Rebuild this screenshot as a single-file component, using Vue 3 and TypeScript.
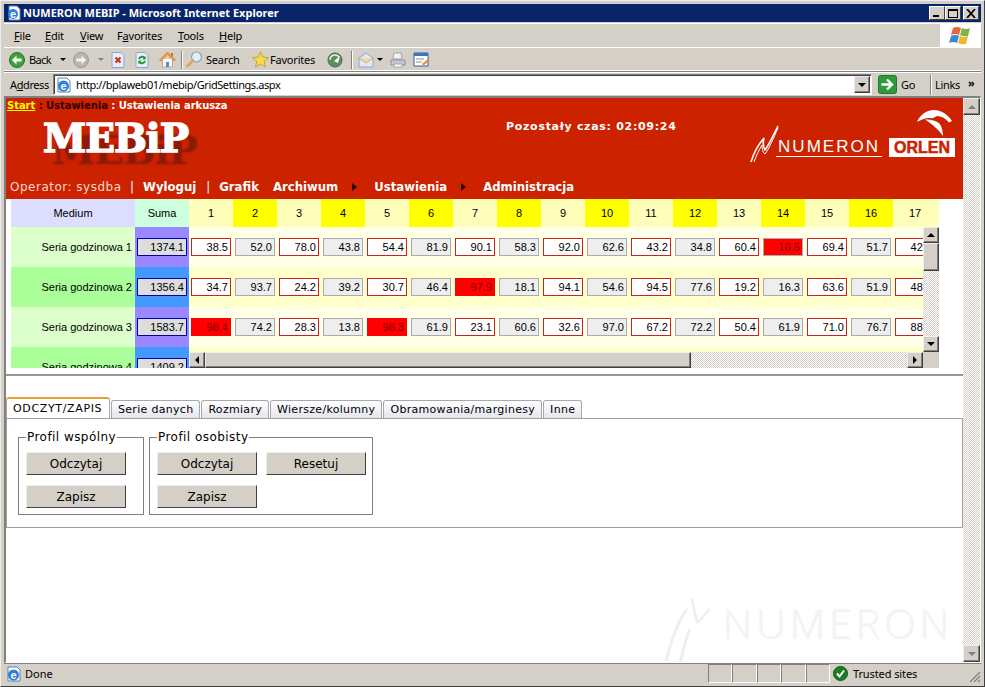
<template>
  <div class="window">
    <div class="titlebar">
      <svg class="title-ie" width="16" height="16" viewBox="0 0 16 16">
        <path d="M3 1h8l3 3v11H3z" fill="#fff" stroke="#5a7fb8" />
        <circle cx="7" cy="9" r="5" fill="#2f7fd6" />
        <text x="7" y="12.5" font-size="11" font-weight="700" text-anchor="middle" fill="#fff" font-family="Liberation Sans">e</text>
      </svg>
      <span class="title-text">NUMERON MEBIP - Microsoft Internet Explorer</span>
      <div class="title-buttons">
        <button class="win-btn"><i class="min"></i></button>
        <button class="win-btn"><i class="max"></i></button>
        <button class="win-btn close">
          <svg width="10" height="9" viewBox="0 0 10 9"><path d="M1 0l8 9M9 0l-8 9" stroke="#000" stroke-width="1.8" /></svg>
        </button>
      </div>
    </div>

    <div class="menubar">
      <div class="menu-items">
        <span v-for="m in menus" :key="m.rest" :style="{ width: m.w + 'px' }">{{ m.pre }}<u>{{ m.key }}</u>{{ m.rest }}</span>
      </div>
      <div class="flag">
        <svg width="26" height="22" viewBox="0 0 26 22">
          <path d="M5 3q4-2 8 0l-2 7q-4-2-8 0z" fill="#e8643a" />
          <path d="M14 3q4 2 8 0l-2 8q-4 1-8-1z" fill="#7ab648" />
          <path d="M3 11q4-2 8 0l-2 7q-4-2-8 0z" fill="#3c86d8" />
          <path d="M12 11q4 2 8 0l-2 8q-4 1-8-1z" fill="#f0b92c" />
        </svg>
      </div>
    </div>

    <div class="toolbar">
      <svg class="tool-back" width="16" height="16" viewBox="0 0 16 16">
        <circle cx="8" cy="8" r="7.5" fill="#3da23d" stroke="#1f7a1f" />
        <path d="M3 8l4.5-4.500V6.500H12.500v3H7.500v3z" fill="#fff" />
      </svg>
      <span class="tool-label back-label">Back</span>
      <i class="drop drop-back"></i>
      <svg class="tool-fwd" width="16" height="16" viewBox="0 0 16 16">
        <circle cx="8" cy="8" r="7.5" fill="#b9b6ae" stroke="#9a978f" />
        <path d="M13 8L8.500 3.500V6.500H3.500v3h5v3z" fill="#f4f3f0" />
      </svg>
      <i class="drop drop-fwd light"></i>
      <svg class="tool-stop" width="14" height="16" viewBox="0 0 14 16">
        <path d="M1 .5h9l3 3v12H1z" fill="#e6eefa" stroke="#8fa6cc" />
        <path d="M4.500 5.500l5 5M9.500 5.500l-5 5" stroke="#d82c20" stroke-width="2.200" />
      </svg>
      <svg class="tool-refresh" width="14" height="16" viewBox="0 0 14 16">
        <path d="M1 .5h9l3 3v12H1z" fill="#e6eefa" stroke="#8fa6cc" />
        <path d="M10 6.500A3.200 3.200 0 0 0 4 7M4 9.500A3.200 3.200 0 0 0 10 9" fill="none" stroke="#1f9a2c" stroke-width="2" />
        <path d="M10.500 4v3.500H7.500zM3.500 12V8.500h3z" fill="#1f9a2c" />
      </svg>
      <svg class="tool-home" width="17" height="17" viewBox="0 0 17 17">
        <path d="M3.500 8v8h10V8" fill="#fbf7ec" stroke="#b8aa90" />
        <path d="M.5 9L8.500 1l8 8-1.500 1L8.500 3.500 2 10z" fill="#f09a3e" stroke="#d47c28" stroke-width=".6" />
        <path d="M7 11h3v5H7z" fill="#4d8fd8" />
        <path d="M12 2h2v4l-2-2z" fill="#c86a18" />
      </svg>
      <i class="tool-sep sep-a"></i>
      <svg class="tool-search" width="17" height="17" viewBox="0 0 17 17">
        <circle cx="10.500" cy="6" r="5" fill="#e2eefa" stroke="#8da0ba" stroke-width="1.200" />
        <path d="M7 9.500L1.500 15" stroke="#d9a468" stroke-width="2.600" stroke-linecap="round" />
      </svg>
      <span class="tool-label search-label">Search</span>
      <svg class="tool-star" width="17" height="17" viewBox="0 0 17 17">
        <path d="M8.500 .8l2.300 5.300 5.700.5-4.300 3.800 1.300 5.600-5-3-5 3 1.300-5.600L.5 6.600l5.700-.5z" fill="#fbd84a" stroke="#b99a2c" stroke-width=".8" />
      </svg>
      <span class="tool-label fav-label">Favorites</span>
      <svg class="tool-media" width="16" height="16" viewBox="0 0 16 16">
        <circle cx="8" cy="8" r="7" fill="#5d8f5d" stroke="#456b45" />
        <path d="M3 8a5 5 0 0 1 9-3" fill="none" stroke="#e8f0e0" stroke-width="1.500" />
        <path d="M7 9l6-5-2 7z" fill="#fff" />
      </svg>
      <i class="tool-sep sep-b"></i>
      <svg class="tool-mail" width="16" height="16" viewBox="0 0 16 16">
        <path d="M1 6l7-5 7 5v9H1z" fill="#dfe9f6" stroke="#8fa6cc" />
        <path d="M1 6l7 5 7-5" fill="#f5d8a8" stroke="#d4aa70" />
      </svg>
      <i class="drop drop-mail"></i>
      <svg class="tool-print" width="16" height="16" viewBox="0 0 16 16">
        <path d="M4 1h7l1 6H3z" fill="#f4f4f4" stroke="#a0a0aa" />
        <path d="M1 8h14v5H1z" fill="#c6c8d0" stroke="#8f929c" />
        <path d="M4 12h8v3H4z" fill="#fff" stroke="#a0a0aa" />
      </svg>
      <svg class="tool-edit" width="17" height="16" viewBox="0 0 17 16">
        <path d="M1 1h14v13H1z" fill="#fff" stroke="#3a5f98" />
        <path d="M1 1h14v3H1z" fill="#3f74c4" />
        <path d="M3 7h8M3 10h6" stroke="#8a8a8a" />
        <path d="M9 12l6-5 1.500 1.500-6 5z" fill="#e08a3c" />
      </svg>
    </div>

    <div class="addressbar">
      <span class="addr-label">A<u>d</u>dress</span>
      <div class="addr-box">
        <svg width="16" height="16" viewBox="0 0 16 16">
          <path d="M2 1h9l3 3v11H2z" fill="#fff" stroke="#5a7fb8" />
          <circle cx="7.500" cy="9" r="5.500" fill="#2f7fd6" />
          <text x="7.500" y="12.500" font-size="11" font-weight="700" text-anchor="middle" fill="#fff" font-family="Liberation Sans">e</text>
        </svg>
        <span class="addr-url">http://bplaweb01/mebip/GridSettings.aspx</span>
        <button class="sb-btn addr-drop"><i class="arrow down"></i></button>
      </div>
      <svg class="go-icon" width="19" height="19" viewBox="0 0 19 19">
        <rect x=".5" y=".5" width="18" height="18" rx="2" fill="#2f9a3c" stroke="#1c7a2a" />
        <path d="M3.500 9.500h10M9 4.500l5 5-5 5" fill="none" stroke="#fff" stroke-width="2.400" />
      </svg>
      <span class="go-label">Go</span>
      <i class="addr-sep"></i>
      <span class="links">Links</span>
      <span class="chevrons">»</span>
    </div>

    <div class="viewport">
      <div class="page">
        <header class="site-head">
          <div class="crumbs">
            <a class="crumb-start">Start</a>
            <span class="crumb-dark"> : Ustawienia</span>
            <span> : Ustawienia arkusza</span>
          </div>
          <div class="brand-row">
            <div class="logo">MEBiP</div>
            <div class="timer">Pozostały czas: 02:09:24</div>
            <div class="partners">
              <svg class="numeron-mark" width="30" height="38" viewBox="0 0 30 38">
                <path d="M2 37C4 30 9 20 15 13c-1 4-1 9 1 12C20 20 25 9 29 1" fill="none" stroke="#fff" stroke-width="1.600" />
                <path d="M5 37C7 31 10 25 13 20c0 4 1 8 3 9C20 24 25 12 29 3" fill="none" stroke="#fff" stroke-width="1" />
              </svg>
              <div class="numeron-word">NUMERON</div>
              <div class="orlen">
                <svg width="38" height="27" viewBox="0 0 38 27">
                  <path d="M1 13C4 6 10 1 18 1c8 0 14 5 18 11l-3 1.500C29 9 25 7 21 7l-5 2.500C12 8 6 10 1 13z" fill="#fff" />
                  <path d="M9 10.500c7 0 13 1.500 15.500 5.500 1.500 3 2.500 7 2.500 11C23 21 16 15 9 10.500z" fill="#fff" />
                </svg>
                <div class="orlen-box">ORLEN</div>
              </div>
            </div>
          </div>
          <nav class="site-nav">
            <span class="operator">Operator: sysdba</span>
            <span class="pipe">|</span>
            <a class="nav-logout">Wyloguj</a>
            <span class="pipe">|</span>
            <a>Grafik</a>
            <a>Archiwum</a>
            <i class="nav-arrow"></i>
            <a>Ustawienia</a>
            <i class="nav-arrow"></i>
            <a>Administracja</a>
          </nav>
        </header>

        <div class="grid">
          <div class="grid-head">
            <div class="col-label head-medium">Medium</div>
            <div class="col-sum head-sum">Suma</div>
            <div v-for="d in 17" :key="d" class="col-day" :class="{ 'head-even': d % 2 === 0 }">{{ d }}</div>
          </div>
          <div v-for="(row, r) in rows" :key="row.label" class="grid-row" :class="{ alt: r % 2 === 1 }">
            <div class="col-label label-cell">{{ row.label }}</div>
            <div class="col-sum sum-cell"><div class="val val-sum">{{ row.sum }}</div></div>
            <div v-for="(v, i) in row.values" :key="i" class="col-day day-cell">
              <div class="val" :class="valClass(v, i)">{{ v }}</div>
            </div>
          </div>
          <div class="grid-vscroll">
            <button class="sb-btn"><i class="arrow up"></i></button>
            <button class="sb-thumb v-thumb"></button>
            <div class="sb-track"></div>
            <button class="sb-btn"><i class="arrow down"></i></button>
          </div>
          <div class="grid-hscroll">
            <button class="sb-btn"><i class="arrow left"></i></button>
            <button class="sb-thumb h-thumb"></button>
            <div class="sb-track"></div>
            <button class="sb-btn"><i class="arrow right"></i></button>
          </div>
          <div class="grid-corner"></div>
        </div>

        <div class="rule"></div>

        <div class="tabs">
          <div v-for="(t, i) in tabs" :key="t" class="tab" :class="{ active: i === 0 }">{{ t }}</div>
        </div>
        <div class="tab-panel">
          <fieldset class="profile shared">
            <legend>Profil wspólny</legend>
            <button class="act">Odczytaj</button>
            <button class="act">Zapisz</button>
          </fieldset>
          <fieldset class="profile own">
            <legend>Profil osobisty</legend>
            <button class="act">Odczytaj</button>
            <button class="act">Resetuj</button>
            <button class="act">Zapisz</button>
          </fieldset>
        </div>

        <div class="watermark">
          <svg width="60" height="66" viewBox="0 0 60 66">
            <path d="M3 64C8 44 14 26 24 12M17 66c3-12 5-22 10-34" fill="none" stroke="#efefef" stroke-width="3" />
            <path d="M29 2l5 24M34 26l13-14" fill="none" stroke="#eeeeee" stroke-width="2.500" />
          </svg>
          <span>NUMERON</span>
        </div>
      </div>

      <div class="page-scroll">
        <button class="sb-btn faint"><i class="arrow up"></i></button>
        <div class="sb-track"></div>
        <button class="sb-btn faint"><i class="arrow down"></i></button>
      </div>
    </div>

    <div class="statusbar">
      <div class="status-main">
        <svg width="16" height="16" viewBox="0 0 16 16">
          <path d="M2 1h9l3 3v11H2z" fill="#fff" stroke="#5a7fb8" />
          <circle cx="7.500" cy="9" r="5.500" fill="#2f7fd6" />
          <text x="7.500" y="12.500" font-size="11" font-weight="700" text-anchor="middle" fill="#fff" font-family="Liberation Sans">e</text>
        </svg>
        <span>Done</span>
      </div>
      <div v-for="n in 5" :key="n" class="status-pane"></div>
      <div class="status-zone">
        <svg width="15" height="15" viewBox="0 0 15 15">
          <circle cx="7.500" cy="7.500" r="7" fill="#1e7d22" stroke="#0f5a14" />
          <path d="M4 7.500l2.500 3 4.500-6" fill="none" stroke="#fff" stroke-width="2" />
        </svg>
        <span>Trusted sites</span>
        <svg class="grip" width="12" height="12" viewBox="0 0 12 12">
          <path d="M11 1L1 11M11 5l-6 6M11 9l-2 2" stroke="#808080" stroke-width="1.200" />
        </svg>
      </div>
    </div>
  </div>
</template>

<script setup lang="ts">
interface GridRow {
  label: string
  sum: string
  values: string[]
}

const menus = [
  { pre: '', key: 'F', rest: 'ile', w: 31 },
  { pre: '', key: 'E', rest: 'dit', w: 35 },
  { pre: '', key: 'V', rest: 'iew', w: 37 },
  { pre: 'F', key: 'a', rest: 'vorites', w: 61 },
  { pre: '', key: 'T', rest: 'ools', w: 41 },
  { pre: '', key: 'H', rest: 'elp', w: 30 }
]

const rows: GridRow[] = [
  {
    label: 'Seria godzinowa 1',
    sum: '1374.1',
    values: ['38.5', '52.0', '78.0', '43.8', '54.4', '81.9', '90.1', '58.3', '92.0', '62.6', '43.2', '34.8', '60.4', '10.5', '69.4', '51.7', '42.6']
  },
  {
    label: 'Seria godzinowa 2',
    sum: '1356.4',
    values: ['34.7', '93.7', '24.2', '39.2', '30.7', '46.4', '97.9', '18.1', '94.1', '54.6', '94.5', '77.6', '19.2', '16.3', '63.6', '51.9', '48.2']
  },
  {
    label: 'Seria godzinowa 3',
    sum: '1583.7',
    values: ['98.4', '74.2', '28.3', '13.8', '98.3', '61.9', '23.1', '60.6', '32.6', '97.0', '67.2', '72.2', '50.4', '61.9', '71.0', '76.7', '88.1']
  },
  { label: 'Seria godzinowa 4', sum: '1409.2', values: [] }
]

const tabs = ['ODCZYT/ZAPIS', 'Serie danych', 'Rozmiary', 'Wiersze/kolumny', 'Obramowania/marginesy', 'Inne']

// above 97 or below 11 the cell goes red, like the page does for out of range values
function valClass(v: string, i: number) {
  const n = parseFloat(v)
  return {
    'val-even': i % 2 === 1,
    'val-alarm': n > 97 || n < 11
  }
}
</script>

<style>
html,
body {
  margin: 0;
  background: #d4d0c8;
}
</style>

<style scoped>
.window {
  width: 985px;
  height: 687px;
  box-sizing: border-box;
  background: #d4d0c8;
  border-top: 1px solid #eee;
  border-left: 1px solid #eee;
  border-right: 1px solid #404040;
  border-bottom: 1px solid #404040;
  padding: 3px 3px 2px;
  display: flex;
  flex-direction: column;
  overflow: hidden;
  font-family: "Noto Sans", "Liberation Sans", sans-serif;
  font-size: 11px;
  color: #000;
}

.titlebar {
  height: 18px;
  flex: none;
  background: #0a246a;
  display: flex;
  align-items: center;
  padding-left: 2px;
  color: #fff;
  font-family: "Noto Sans", sans-serif;
  font-size: 11px;
  font-weight: 700;
}

.title-ie {
  margin-right: 1px;
}

.title-text {
  white-space: nowrap;
  margin-top: -2px;
}

.title-buttons {
  margin-left: auto;
  display: flex;
  margin-right: 2px;
}

.win-btn {
  width: 16px;
  height: 14px;
  padding: 0;
  background: #d4d0c8;
  border: 1px solid;
  border-color: #fff #404040 #404040 #fff;
  display: flex;
  align-items: center;
  justify-content: center;
  position: relative;
}

.win-btn.close {
  margin-left: 2px;
}

.min {
  position: absolute;
  left: 3px;
  bottom: 2px;
  width: 6px;
  height: 2px;
  background: #000;
}

.max {
  width: 8px;
  height: 6px;
  border: 1px solid #000;
  border-top-width: 2px;
}

.menubar {
  height: 23px;
  flex: none;
  margin-top: 2px;
  display: flex;
  border-bottom: 1px solid #fff;
  box-shadow: 0 -1px 0 #fff;
  letter-spacing: -.2px;
}

.menu-items {
  flex: 1;
  padding-left: 10px;
  display: flex;
  align-items: center;
}

.menu-items span {
  flex: none;
}

.flag {
  width: 41px;
  background: #fff;
  display: flex;
  align-items: center;
  justify-content: center;
}

.toolbar {
  height: 23px;
  flex: none;
  display: flex;
  align-items: center;
  border-bottom: 1px solid #808080;
  box-shadow: inset 0 -1px 0 #fff;
  padding-left: 5px;
  letter-spacing: -.2px;
}

.toolbar svg {
  flex: none;
}

.tool-label {
  flex: none;
}

.back-label { margin-left: 4px; width: 31px; letter-spacing: -.6px; }
.drop { flex: none; width: 0; height: 0; border: 3px solid transparent; border-top: 3px solid #000; border-bottom: 0; }
.drop.light { border-top-color: #808080; }
.drop-back { margin-right: 7px; }
.drop-fwd { margin-left: 9px; }
.tool-stop { margin-left: 7px; }
.tool-refresh { margin-left: 10px; }
.tool-home { margin-left: 10px; }
.tool-sep { flex: none; width: 1px; height: 18px; background: #808080; box-shadow: 1px 0 #fff; }
.sep-a { margin-left: 5px; }
.tool-search { margin-left: 4px; }
.search-label { margin-left: 3px; width: 34px; }
.tool-star { margin-left: 12px; }
.fav-label { margin-left: 1px; width: 47px; }
.tool-media { margin-left: 10px; }
.sep-b { margin-left: 8px; }
.tool-mail { margin-left: 6px; }
.drop-mail { margin-left: 3px; }
.tool-print { margin-left: 7px; }
.tool-edit { margin-left: 7px; }

.addressbar {
  height: 24px;
  flex: none;
  display: flex;
  align-items: center;
  box-sizing: border-box;
  border-top: 1px solid #fff;
  padding-left: 6px;
}

.addr-label {
  width: 43px;
  flex: none;
  letter-spacing: -.4px;
}

.addr-box {
  width: 819px;
  height: 21px;
  flex: none;
  box-sizing: border-box;
  background: #fff;
  border: 1px solid;
  border-color: #808080 #fff #fff #808080;
  box-shadow: inset 1px 1px #404040;
  display: flex;
  align-items: center;
  padding-left: 2px;
}

.addr-url {
  margin-left: 4px;
  flex: 1;
  letter-spacing: -.42px;
}

.addr-drop {
  width: 16px;
  height: 17px;
  margin-right: 1px;
}

.go-icon {
  margin-left: 6px;
  flex: none;
}

.go-label {
  margin-left: 4px;
  width: 29px;
  flex: none;
  letter-spacing: -.3px;
}

.addr-sep {
  width: 1px;
  height: 20px;
  background: #808080;
  box-shadow: 1px 0 #fff;
  flex: none;
}

.links {
  margin-left: 4px;
  flex: none;
  letter-spacing: -.3px;
}

.chevrons {
  margin-left: 8px;
  margin-top: -4px;
  font-weight: 700;
  flex: none;
}

.viewport {
  flex: 1;
  min-height: 0;
  display: flex;
  border-top: 2px solid #808080;
  border-left: 2px solid #808080;
  border-right: 1px solid #fff;
  border-bottom: 1px solid #fff;
}

.page {
  width: 957px;
  flex: none;
  position: relative;
  overflow: hidden;
  background: #fff;
}

.site-head {
  height: 101px;
  background: #cc2200;
  box-sizing: border-box;
  color: #fff;
  font-family: "DejaVu Sans", sans-serif;
  display: flex;
  flex-direction: column;
}

.crumbs {
  padding: 2px 0 0 1px;
  font-size: 10px;
  font-weight: 700;
  white-space: pre;
  height: 12px;
  letter-spacing: -.05px;
}

.crumb-start {
  color: #ffff00;
  text-decoration: underline;
}

.crumb-dark {
  color: #300;
}

.brand-row {
  height: 65px;
  display: flex;
  flex: none;
}

.logo {
  margin: 0 0 0 37px;
  width: 300px;
  height: 52px;
  flex: none;
  font-family: "DejaVu Serif", serif;
  font-weight: 700;
  font-size: 39px;
  line-height: 52px;
  letter-spacing: -1px;
  -webkit-text-stroke: 1.5px #fff;
  text-shadow: 9px 12px 2px #8b1a08;
}

.timer {
  margin: 8px 0 0 163px;
  width: 200px;
  flex: none;
  font-size: 11px;
  font-weight: 700;
  letter-spacing: .7px;
  white-space: nowrap;
}

.partners {
  flex: 1;
  display: flex;
  align-items: flex-end;
  padding-bottom: 20px;
  margin-left: 43px;
}

.numeron-mark {
  flex: none;
  margin-bottom: -6px;
}

.numeron-word {
  width: 106px;
  box-sizing: border-box;
  font-family: "Liberation Sans", sans-serif;
  font-size: 17px;
  line-height: 19px;
  letter-spacing: 2px;
  border-bottom: 1px solid #fff;
  text-align: center;
  margin-left: -3px;
}

.orlen {
  margin-left: 7px;
  display: flex;
  flex-direction: column;
  align-items: flex-end;
  width: 66px;
}

.orlen svg {
  margin-right: 1px;
  margin-bottom: 2px;
}

.orlen-box {
  width: 66px;
  height: 19px;
  background: #fff;
  color: #cc2200;
  font-family: "Liberation Sans", sans-serif;
  font-weight: 700;
  font-size: 16px;
  line-height: 19px;
  text-align: center;
  -webkit-text-stroke: .5px #cc2200;
}

.site-nav {
  display: flex;
  align-items: center;
  padding-left: 4px;
  font-size: 11.7px;
  font-weight: 700;
  height: 20px;
  white-space: nowrap;
}

.operator {
  font-size: 12px;
  font-weight: 400;
  letter-spacing: .5px;
  color: #f4d8cc;
  width: 120px;
}

.pipe {
  font-weight: 400;
  width: 13px;
}

.site-nav a {
  margin-right: 14px;
}

.site-nav a.nav-logout {
  margin-right: 10px;
}

.nav-arrow {
  width: 0;
  height: 0;
  border: 4px solid transparent;
  border-left: 5px solid #300;
  border-right: 0;
  margin-right: 17px;
}

.grid {
  margin-left: 5px;
  width: 928px;
  height: 169px;
  position: relative;
  overflow: hidden;
  font-family: "Liberation Sans", sans-serif;
  font-size: 11px;
}

.grid-head {
  display: flex;
  height: 28px;
  background: #ffffbb;
  align-items: stretch;
}

.grid-head > div {
  display: flex;
  align-items: center;
  justify-content: center;
}

.grid-row {
  display: flex;
  height: 40px;
  width: 926px;
  background: #ffffe8;
}

.grid-row.alt {
  background: #ffffcc;
}

.col-label {
  width: 124px;
  flex: none;
}

.col-sum {
  width: 54px;
  flex: none;
}

.col-day {
  width: 44px;
  flex: none;
}

.head-medium {
  background: #ddddff;
}

.head-sum {
  background: #ccffdd;
}

.head-even {
  background: #ffff00;
}

.label-cell {
  background: #ddffcc;
  text-align: right;
  padding-right: 3px;
  box-sizing: border-box;
  line-height: 40px;
  white-space: nowrap;
}

.alt .label-cell {
  background: #aaff99;
}

.sum-cell {
  background: #9988ff;
  display: flex;
  justify-content: center;
  align-items: center;
}

.alt .sum-cell {
  background: #4499ff;
}

.day-cell {
  display: flex;
  justify-content: center;
  align-items: center;
}

.val {
  width: 40px;
  height: 18px;
  box-sizing: border-box;
  border: 1px solid #cc2222;
  background: #fff;
  text-align: right;
  padding-right: 2px;
  line-height: 16px;
}

.val-sum {
  width: 50px;
  border-color: #0000aa;
  background: #dddddd;
}

.val-even {
  border-color: #aaaaaa;
  background: #eeeeee;
}

.val-alarm {
  background: #ff0000;
  border-color: #ff0000;
  color: #880000;
}

.val-alarm.val-even {
  border-color: #aaaaaa;
}

.grid-vscroll {
  position: absolute;
  left: 912px;
  top: 28px;
  width: 16px;
  height: 125px;
  display: flex;
  flex-direction: column;
}

.grid-hscroll {
  position: absolute;
  left: 178px;
  top: 153px;
  width: 734px;
  height: 16px;
  display: flex;
}

.grid-corner {
  position: absolute;
  left: 912px;
  top: 153px;
  width: 16px;
  height: 16px;
  background: #d4d0c8;
}

.sb-btn,
.sb-thumb {
  flex: none;
  padding: 0;
  background: #d4d0c8;
  border: 1px solid;
  border-color: #eee #404040 #404040 #eee;
  box-shadow: inset -1px -1px #808080;
  box-sizing: border-box;
  display: flex;
  align-items: center;
  justify-content: center;
}

.grid-vscroll .sb-btn,
.grid-hscroll .sb-btn {
  width: 16px;
  height: 16px;
}

.v-thumb {
  height: 28px;
}

.h-thumb {
  width: 486px;
}

.sb-track {
  flex: 1;
  background: repeating-conic-gradient(#d4d0c8 0 25%, #fff 0 50%) 0 0 / 2px 2px;
}

.arrow {
  width: 0;
  height: 0;
  border: 4px solid transparent;
}

.arrow.up {
  border-bottom-color: #000;
  border-top: 0;
}

.arrow.down {
  border-top-color: #000;
  border-bottom: 0;
}

.arrow.left {
  border-right-color: #000;
  border-left: 0;
}

.arrow.right {
  border-left-color: #000;
  border-right: 0;
}

.faint .arrow.up {
  border-bottom-color: #808080;
}

.faint .arrow.down {
  border-top-color: #808080;
}

.rule {
  margin-top: 6px;
  height: 2px;
  background: #808080;
  opacity: .8;
}

.tabs {
  margin: 22px 0 0;
  height: 20px;
  display: flex;
  font-family: "DejaVu Sans", sans-serif;
  font-size: 11px;
}

.tab {
  margin-left: 1px;
  padding: 0 6px;
  height: 18px;
  margin-top: 2px;
  line-height: 18px;
  box-sizing: border-box;
  border: 1px solid #a8a8b0;
  border-bottom: 0;
  border-radius: 3px 3px 0 0;
  background: linear-gradient(#fff, #e4e4ee);
  white-space: nowrap;
  letter-spacing: .3px;
}

.tab.active {
  width: 104px;
  height: 21px;
  margin-top: -1px;
  margin-left: 0;
  line-height: 20px;
  letter-spacing: .65px;
  background: #fff;
  border-top: 2px solid #e8a030;
  position: relative;
  z-index: 1;
}

.tab-panel {
  height: 110px;
  box-sizing: border-box;
  border: 1px solid #a0a0a0;
  display: flex;
  padding: 11px 0 0 11px;
  gap: 5px;
  align-items: flex-start;
}

.profile {
  margin: 0;
  box-sizing: border-box;
  height: 85px;
  border: 1px solid #808080;
  padding: 8px 0 0 7px;
  font-family: "DejaVu Sans", sans-serif;
  font-size: 12px;
  display: grid;
  gap: 10px 9px;
  align-content: start;
}

.shared {
  width: 126px;
  grid-template-columns: 100px;
}

.own {
  width: 224px;
  grid-template-columns: 100px 100px;
}

.profile legend {
  padding: 0 1px;
  line-height: 14px;
  letter-spacing: .45px;
}

.act {
  width: 100px;
  height: 23px;
  padding: 0;
  box-sizing: border-box;
  background: #d4d0c8;
  border: 1px solid;
  border-color: #f0eee8 #404040 #404040 #f0eee8;
  font-family: "DejaVu Sans", sans-serif;
  font-size: 12px;
  color: #000;
}

.watermark {
  position: absolute;
  left: 657px;
  top: 499px;
  display: flex;
  align-items: center;
  color: #f5f5f5;
  font-family: "Open Sans", "Liberation Sans", sans-serif;
  font-weight: 300;
  font-size: 41px;
  white-space: nowrap;
}

.watermark span {
  margin-left: -1px;
  margin-top: -16px;
  letter-spacing: 4px;
  text-shadow: 1px 1px 0 #f0f0f0;
}

.page-scroll {
  width: 17px;
  flex: none;
  display: flex;
  flex-direction: column;
}

.page-scroll .sb-btn {
  height: 17px;
}

.statusbar {
  height: 21px;
  flex: none;
  display: flex;
  align-items: stretch;
  border-top: 1px solid #808080;
  box-sizing: border-box;
  padding: 0 0 1px;
}

.status-main {
  width: 704px;
  flex: none;
  display: flex;
  align-items: center;
  gap: 3px;
  padding-left: 2px;
  box-sizing: border-box;
}

.status-pane {
  width: 24.4px;
  flex: none;
  box-sizing: border-box;
  border: 1px solid;
  border-color: #808080 #fff #fff #808080;
}

.status-zone {
  flex: 1;
  display: flex;
  align-items: center;
  gap: 5px;
  padding-left: 3px;
  position: relative;
  letter-spacing: -.1px;
}

.grip {
  position: absolute;
  right: 0;
  bottom: 0;
}
</style>
